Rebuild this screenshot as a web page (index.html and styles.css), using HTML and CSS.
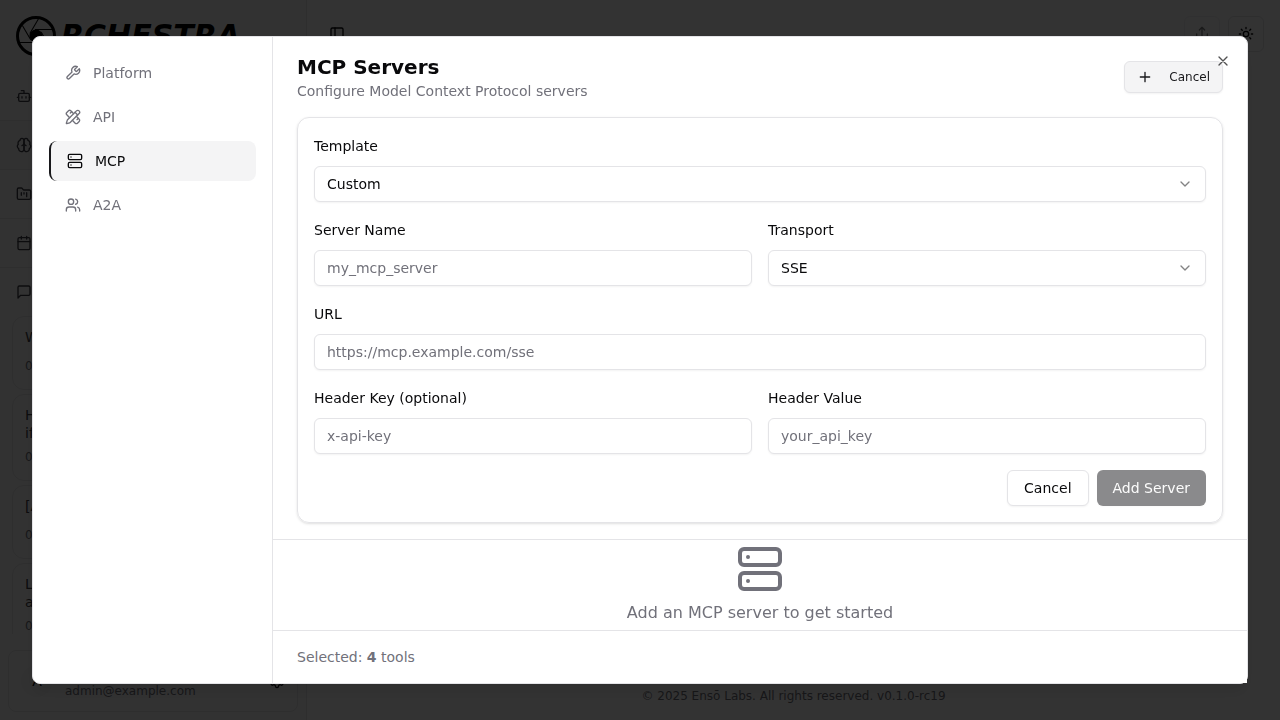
FILE: index.html
```html
<!doctype html>
<html lang="en">
<head>
    <meta charset="utf-8">
    <title>Orchestra - MCP Servers</title>
    <link rel="stylesheet" href="styles.css">
</head>
<body>

    <!-- shared icons -->
    <svg class="Sprite" aria-hidden="true">
        <symbol id="i-server" viewBox="0 0 24 24">
            <rect width="20" height="8" x="2" y="2" rx="2"/>
            <rect width="20" height="8" x="2" y="14" rx="2"/>
            <path d="M6 6h.01M6 18h.01"/>
        </symbol>
        <symbol id="i-chevron" viewBox="0 0 24 24">
            <path d="m6 9 6 6 6-6"/>
        </symbol>
    </svg>

    <!-- app behind the dialog -->
    <div class="App">
        <aside class="Sidebar">
            <div class="Logo">
                <svg class="Logo-mark" viewBox="0 0 40 40" aria-hidden="true">
                    <circle cx="20" cy="20" r="18.5" fill="none" stroke="#000" stroke-width="3"/>
                    <g stroke="#000" stroke-width="1">
                        <path d="M19 13.5H36"/>
                        <path d="M19 13.5H36" transform="rotate(60 20 20)"/>
                        <path d="M19 13.5H36" transform="rotate(120 20 20)"/>
                        <path d="M19 13.5H36" transform="rotate(180 20 20)"/>
                        <path d="M19 13.5H36" transform="rotate(240 20 20)"/>
                        <path d="M19 13.5H36" transform="rotate(300 20 20)"/>
                    </g>
                    <circle cx="20" cy="20" r="6.5"/>
                </svg>
                <span class="Logo-text">RCHESTRA</span>
            </div>
            <nav class="Menu">
                <a class="Menu-item" href="#" aria-label="Assistants">
                    <svg class="Icon" viewBox="0 0 24 24"><path d="M12 8V4H8"/><rect width="16" height="12" x="4" y="8" rx="2"/><path d="M2 14h2M20 14h2M15 13v2M9 13v2"/></svg>
                </a>
                <a class="Menu-item Menu-item--active" href="#" aria-label="Memories">
                    <svg class="Icon" viewBox="0 0 24 24"><path d="M12 5a3 3 0 1 0-5.997.125 4 4 0 0 0-2.526 5.77 4 4 0 0 0 .556 6.588A4 4 0 1 0 12 18Z"/><path d="M12 5a3 3 0 1 1 5.997.125 4 4 0 0 1 2.526 5.77 4 4 0 0 1-.556 6.588A4 4 0 1 1 12 18Z"/><path d="M15 13a4.5 4.5 0 0 1-3-4 4.5 4.5 0 0 1-3 4"/></svg>
                </a>
                <a class="Menu-item" href="#" aria-label="Projects">
                    <svg class="Icon" viewBox="0 0 24 24"><path d="M4 20h16a2 2 0 0 0 2-2V8a2 2 0 0 0-2-2h-7.930a2 2 0 0 1-1.660-.9l-.820-1.200A2 2 0 0 0 7.930 3H4a2 2 0 0 0-2 2v13c0 1.100.9 2 2 2Z"/><path d="M8 10v4M12 10v2M16 10v6"/></svg>
                </a>
                <a class="Menu-item" href="#" aria-label="Schedules">
                    <svg class="Icon" viewBox="0 0 24 24"><path d="M8 2v4M16 2v4"/><rect width="18" height="18" x="3" y="4" rx="2"/><path d="M3 10h18"/></svg>
                </a>
                <a class="Menu-item" href="#" aria-label="Threads">
                    <svg class="Icon" viewBox="0 0 24 24"><path d="M21 15a2 2 0 0 1-2 2H7l-4 4V5a2 2 0 0 1 2-2h14a2 2 0 0 1 2 2z"/></svg>
                </a>
            </nav>
            <div class="Threads">
                <div class="Thread"><p class="Thread-title">W</p><p class="Thread-date">0</p></div>
                <div class="Thread"><p class="Thread-title">H<br>if</p><p class="Thread-date">0</p></div>
                <div class="Thread"><p class="Thread-title">[A</p><p class="Thread-date">0</p></div>
                <div class="Thread"><p class="Thread-title">L<br>a</p><p class="Thread-date">0</p></div>
            </div>
            <div class="Profile">
                <span class="Avatar">A</span>
                <span class="Profile-email">admin@example.com</span>
                <svg class="Icon" viewBox="0 0 24 24"><path d="M12.220 2h-.440a2 2 0 0 0-2 2v.180a2 2 0 0 1-1 1.730l-.430.250a2 2 0 0 1-2 0l-.150-.080a2 2 0 0 0-2.730.730l-.220.380a2 2 0 0 0 .730 2.730l.150.100a2 2 0 0 1 1 1.720v.510a2 2 0 0 1-1 1.740l-.150.090a2 2 0 0 0-.730 2.730l.220.380a2 2 0 0 0 2.730.730l.150-.080a2 2 0 0 1 2 0l.430.250a2 2 0 0 1 1 1.730V20a2 2 0 0 0 2 2h.440a2 2 0 0 0 2-2v-.180a2 2 0 0 1 1-1.730l.430-.250a2 2 0 0 1 2 0l.150.080a2 2 0 0 0 2.730-.730l.220-.390a2 2 0 0 0-.730-2.730l-.150-.080a2 2 0 0 1-1-1.740v-.500a2 2 0 0 1 1-1.740l.150-.090a2 2 0 0 0 .730-2.730l-.220-.380a2 2 0 0 0-2.730-.730l-.150.080a2 2 0 0 1-2 0l-.430-.250a2 2 0 0 1-1-1.730V4a2 2 0 0 0-2-2z"/><circle cx="12" cy="12" r="3"/></svg>
            </div>
        </aside>
        <div class="Page">
            <header class="Topbar">
                <button class="Topbar-toggle" type="button" aria-label="Toggle sidebar">
                    <svg class="Icon" viewBox="0 0 24 24"><rect width="18" height="18" x="3" y="3" rx="2"/><path d="M9 3v18"/></svg>
                </button>
                <button class="Topbar-button" type="button" aria-label="Share" disabled>
                    <svg class="Icon" viewBox="0 0 24 24"><path d="M12 2v13M16 6l-4-4-4 4M4 12v8a2 2 0 0 0 2 2h12a2 2 0 0 0 2-2v-8"/></svg>
                </button>
                <button class="Topbar-button" type="button" aria-label="Theme">
                    <svg class="Icon" viewBox="0 0 24 24"><circle cx="12" cy="12" r="4"/><path d="M12 2v2M12 20v2M4.930 4.930l1.410 1.410M17.660 17.660l1.410 1.410M2 12h2M20 12h2M6.340 17.660l-1.410 1.410M19.070 4.930l-1.410 1.410"/></svg>
                </button>
            </header>
            <footer class="Copyright">© 2025 Ensō Labs. All rights reserved. v0.1.0-rc19</footer>
        </div>
    </div>

    <!-- tools dialog -->
    <div class="Overlay">
        <div class="Dialog" role="dialog" aria-modal="true" aria-labelledby="dialog-title">
            <nav class="Tabs">
                <a class="Tab" href="#platform">
                    <svg class="Icon" viewBox="0 0 24 24"><path d="M14.700 6.300a1 1 0 0 0 0 1.400l1.600 1.600a1 1 0 0 0 1.400 0l3.770-3.770a6 6 0 0 1-7.940 7.940l-6.910 6.910a2.120 2.120 0 0 1-3-3l6.910-6.910a6 6 0 0 1 7.940-7.940l-3.760 3.760z"/></svg>
                    Platform
                </a>
                <a class="Tab" href="#api">
                    <svg class="Icon" viewBox="0 0 24 24"><path d="M13 7 8.700 2.700a2.410 2.410 0 0 0-3.400 0L2.700 5.300a2.410 2.410 0 0 0 0 3.400L7 13"/><path d="m8 6 2-2M18 16l2-2"/><path d="m17 11 4.300 4.300c.940.940.940 2.460 0 3.400l-2.600 2.600c-.940.940-2.460.940-3.400 0L11 17"/><path d="M21.174 6.812a1 1 0 0 0-3.986-3.987L3.842 16.174a2 2 0 0 0-.5.830l-1.321 4.352a.5.5 0 0 0 .623.622l4.353-1.320a2 2 0 0 0 .830-.497z"/><path d="m15 5 4 4"/></svg>
                    API
                </a>
                <a class="Tab Tab--active" href="#mcp" aria-current="page">
                    <svg class="Icon"><use href="#i-server"/></svg>
                    MCP
                </a>
                <a class="Tab" href="#a2a">
                    <svg class="Icon" viewBox="0 0 24 24"><path d="M16 21v-2a4 4 0 0 0-4-4H6a4 4 0 0 0-4 4v2"/><circle cx="9" cy="7" r="4"/><path d="M22 21v-2a4 4 0 0 0-3-3.870M16 3.130a4 4 0 0 1 0 7.750"/></svg>
                    A2A
                </a>
            </nav>

            <div class="Panel">
                <section class="Panel-main">
                    <header class="Panel-header">
                        <div>
                            <h2 class="Title" id="dialog-title">MCP Servers</h2>
                            <p class="Subtitle">Configure Model Context Protocol servers</p>
                        </div>
                        <button class="Button Button--small" type="button">
                            <svg class="Icon" viewBox="0 0 24 24"><path d="M5 12h14M12 5v14"/></svg>
                            Cancel
                        </button>
                    </header>

                    <form class="Card">
                        <div class="Field Field--wide">
                            <label for="template">Template</label>
                            <div class="Select">
                                <select class="Input" id="template"><option>Custom</option></select>
                                <svg class="Icon"><use href="#i-chevron"/></svg>
                            </div>
                        </div>
                        <div class="Field">
                            <label for="name">Server Name</label>
                            <input class="Input" id="name" type="text" placeholder="my_mcp_server">
                        </div>
                        <div class="Field">
                            <label for="transport">Transport</label>
                            <div class="Select">
                                <select class="Input" id="transport"><option>SSE</option></select>
                                <svg class="Icon"><use href="#i-chevron"/></svg>
                            </div>
                        </div>
                        <div class="Field Field--wide">
                            <label for="url">URL</label>
                            <input class="Input" id="url" type="text" placeholder="https://mcp.example.com/sse">
                        </div>
                        <div class="Field">
                            <label for="header-key">Header Key (optional)</label>
                            <input class="Input" id="header-key" type="text" placeholder="x-api-key">
                        </div>
                        <div class="Field">
                            <label for="header-value">Header Value</label>
                            <input class="Input" id="header-value" type="text" placeholder="your_api_key">
                        </div>
                        <div class="Actions">
                            <button class="Button" type="button">Cancel</button>
                            <button class="Button Button--primary" type="submit" disabled>Add Server</button>
                        </div>
                    </form>
                </section>

                <section class="Empty">
                    <svg class="Icon Icon--large"><use href="#i-server"/></svg>
                    <p>Add an MCP server to get started</p>
                </section>

                <footer class="Panel-footer">Selected: <strong>4</strong> tools</footer>
            </div>

            <button class="Close" type="button" aria-label="Close">
                <svg class="Icon" viewBox="0 0 24 24"><path d="M18 6 6 18M6 6l12 12"/></svg>
            </button>
        </div>
    </div>

</body>
</html>
```
FILE: styles.css
```css
*, *:before, *:after {
    box-sizing: border-box;
    margin: 0;
    padding: 0;
}

body, button, input, select {
    font-family: "DejaVu Sans", sans-serif;
    font-size: 14px;
    line-height: 20px;
    color: #09090b;
}

body {
    background: #fff;
    overflow: hidden;
}

a {
    color: inherit;
    text-decoration: none;
}

button {
    background: none;
    border: 0;
}

.Sprite {
    display: none;
}

.Icon {
    display: block;
    flex: none;
    width: 16px;
    height: 16px;
    fill: none;
    stroke: currentColor;
    stroke-width: 2;
    stroke-linecap: round;
    stroke-linejoin: round;
}

.Icon--large {
    width: 48px;
    height: 48px;
}

/* App */

.App {
    display: flex;
    height: 100vh;
}

.Sidebar {
    display: flex;
    flex-direction: column;
    flex: none;
    width: 307px;
    background: #fafafa;
    border-right: 1px solid #e4e4e7;
}

.Logo {
    display: flex;
    align-items: center;
    gap: 5px;
    height: 72px;
    padding: 0 16px;
}

.Logo-mark {
    width: 40px;
    height: 40px;
}

.Logo-text {
    font-size: 30px;
    font-weight: bold;
    font-style: italic;
    line-height: 36px;
    color: #000;
}

.Menu-item {
    display: flex;
    align-items: center;
    height: 49px;
    padding: 0 16px;
    border-bottom: 1px solid #e4e4e7;
    color: #3f3f46;
}

.Menu-item--active {
    background: #f4f4f5;
}

.Menu-item:last-child {
    height: 48px;
    border-bottom: 0;
}

.Threads {
    display: flex;
    flex-direction: column;
    gap: 4px;
    flex: 1;
    min-height: 0;
    margin-bottom: 16px;
    padding: 0 12px;
    overflow: hidden;
}

.Thread {
    flex: none;
    padding: 11px 12px 15px;
    border: 1px solid #e4e4e7;
    border-radius: 12px;
}

.Thread-title {
    min-height: 23px;
    line-height: 18px;
    color: #3f3f46;
}

.Thread-date {
    margin-top: 7px;
    font-size: 12px;
    line-height: 16px;
    color: #71717a;
}

.Profile {
    display: flex;
    align-items: center;
    gap: 12px;
    height: 62px;
    margin: 0 8px 8px;
    padding: 0 12px;
    border: 1px solid #e4e4e7;
    border-radius: 8px;
}

.Avatar {
    width: 32px;
    height: 32px;
    border-radius: 50%;
    background: #f4f4f5;
    line-height: 32px;
    text-align: center;
}

.Profile-email {
    flex: 1;
    padding-top: 20px;
    font-size: 12px;
    color: #71717a;
}

.Page {
    display: flex;
    flex-direction: column;
    justify-content: space-between;
    flex: 1;
}

.Topbar {
    display: flex;
    align-items: center;
    gap: 8px;
    padding: 16px 16px 0 22px;
}

.Topbar-toggle {
    margin-right: auto;
}

.Topbar-button {
    padding: 9px;
    border: 1px solid #e4e4e7;
    border-radius: 6px;
}

.Topbar-button:disabled {
    opacity: 0.5;
}

.Copyright {
    padding-bottom: 16px;
    font-size: 12px;
    line-height: 16px;
    text-align: center;
    color: #71717a;
}

/* Dialog */

.Overlay {
    position: fixed;
    inset: 0;
    display: flex;
    align-items: center;
    justify-content: center;
    background: rgba(0, 0, 0, 0.8);
}

.Dialog {
    position: relative;
    display: flex;
    width: 95vw;
    height: 90vh;
    background: #fff;
    border: 1px solid #e4e4e7;
    border-radius: 8px;
    box-shadow: 0 10px 15px -3px rgba(0, 0, 0, 0.1);
}

.Close {
    position: absolute;
    top: 16px;
    right: 16px;
    opacity: 0.7;
}

.Tabs {
    display: flex;
    flex-direction: column;
    gap: 4px;
    flex: none;
    width: 240px;
    padding: 16px;
    border-right: 1px solid #e4e4e7;
}

.Tab {
    display: flex;
    align-items: center;
    gap: 12px;
    height: 40px;
    padding: 0 16px;
    border-radius: 8px;
    color: #71717a;
}

.Tab--active {
    border-left: 2px solid #18181b;
    background: #f4f4f5;
    color: #09090b;
}

.Panel {
    display: flex;
    flex-direction: column;
    flex: 1;
    min-width: 0;
}

.Panel-main {
    flex: none;
    padding: 16px 24px;
    border-bottom: 1px solid #e4e4e7;
}

.Panel-header {
    display: flex;
    align-items: center;
    justify-content: space-between;
    margin-bottom: 16px;
}

.Title {
    font-size: 20px;
    line-height: 28px;
}

.Subtitle {
    color: #71717a;
}

.Card {
    display: grid;
    grid-template-columns: 1fr 1fr;
    gap: 16px;
    padding: 16px;
    border: 1px solid #e4e4e7;
    border-radius: 12px;
    box-shadow: 0 1px 3px rgba(0, 0, 0, 0.1), 0 1px 2px -1px rgba(0, 0, 0, 0.1);
}

.Field--wide, .Actions {
    grid-column: 1 / -1;
}

.Field label {
    display: block;
    margin-bottom: 8px;
    line-height: 24px;
}

.Input {
    display: block;
    width: 100%;
    height: 36px;
    padding: 0 12px;
    border: 1px solid #e4e4e7;
    border-radius: 6px;
    background: #fff;
    box-shadow: 0 1px 2px rgba(0, 0, 0, 0.05);
    appearance: none;
}

.Input::placeholder {
    color: #71717a;
}

.Select {
    position: relative;
}

.Select .Icon {
    position: absolute;
    top: 10px;
    right: 13px;
    opacity: 0.5;
    pointer-events: none;
}

.Actions {
    display: flex;
    justify-content: flex-end;
    gap: 8px;
}

.Button {
    display: flex;
    align-items: center;
    gap: 16px;
    height: 36px;
    padding: 0 16px;
    border: 1px solid #e4e4e7;
    border-radius: 6px;
    background: #fff;
    box-shadow: 0 1px 2px rgba(0, 0, 0, 0.05);
}

.Button--small {
    height: 32px;
    padding: 0 12px;
    background: #f4f4f5;
    color: #18181b;
    font-size: 12px;
}

.Button--primary {
    border: 0;
    background: #18181b;
    color: #fafafa;
}

.Button--primary:disabled {
    opacity: 0.5;
}

.Empty {
    display: flex;
    flex-direction: column;
    align-items: center;
    justify-content: center;
    gap: 8px;
    flex: 1;
    min-height: 0;
    overflow: hidden;
    font-size: 16px;
    line-height: 24px;
    color: #71717a;
}

.Panel-footer {
    padding: 16px 24px;
    border-top: 1px solid #e4e4e7;
    background: #fff;
    color: #71717a;
}
```
